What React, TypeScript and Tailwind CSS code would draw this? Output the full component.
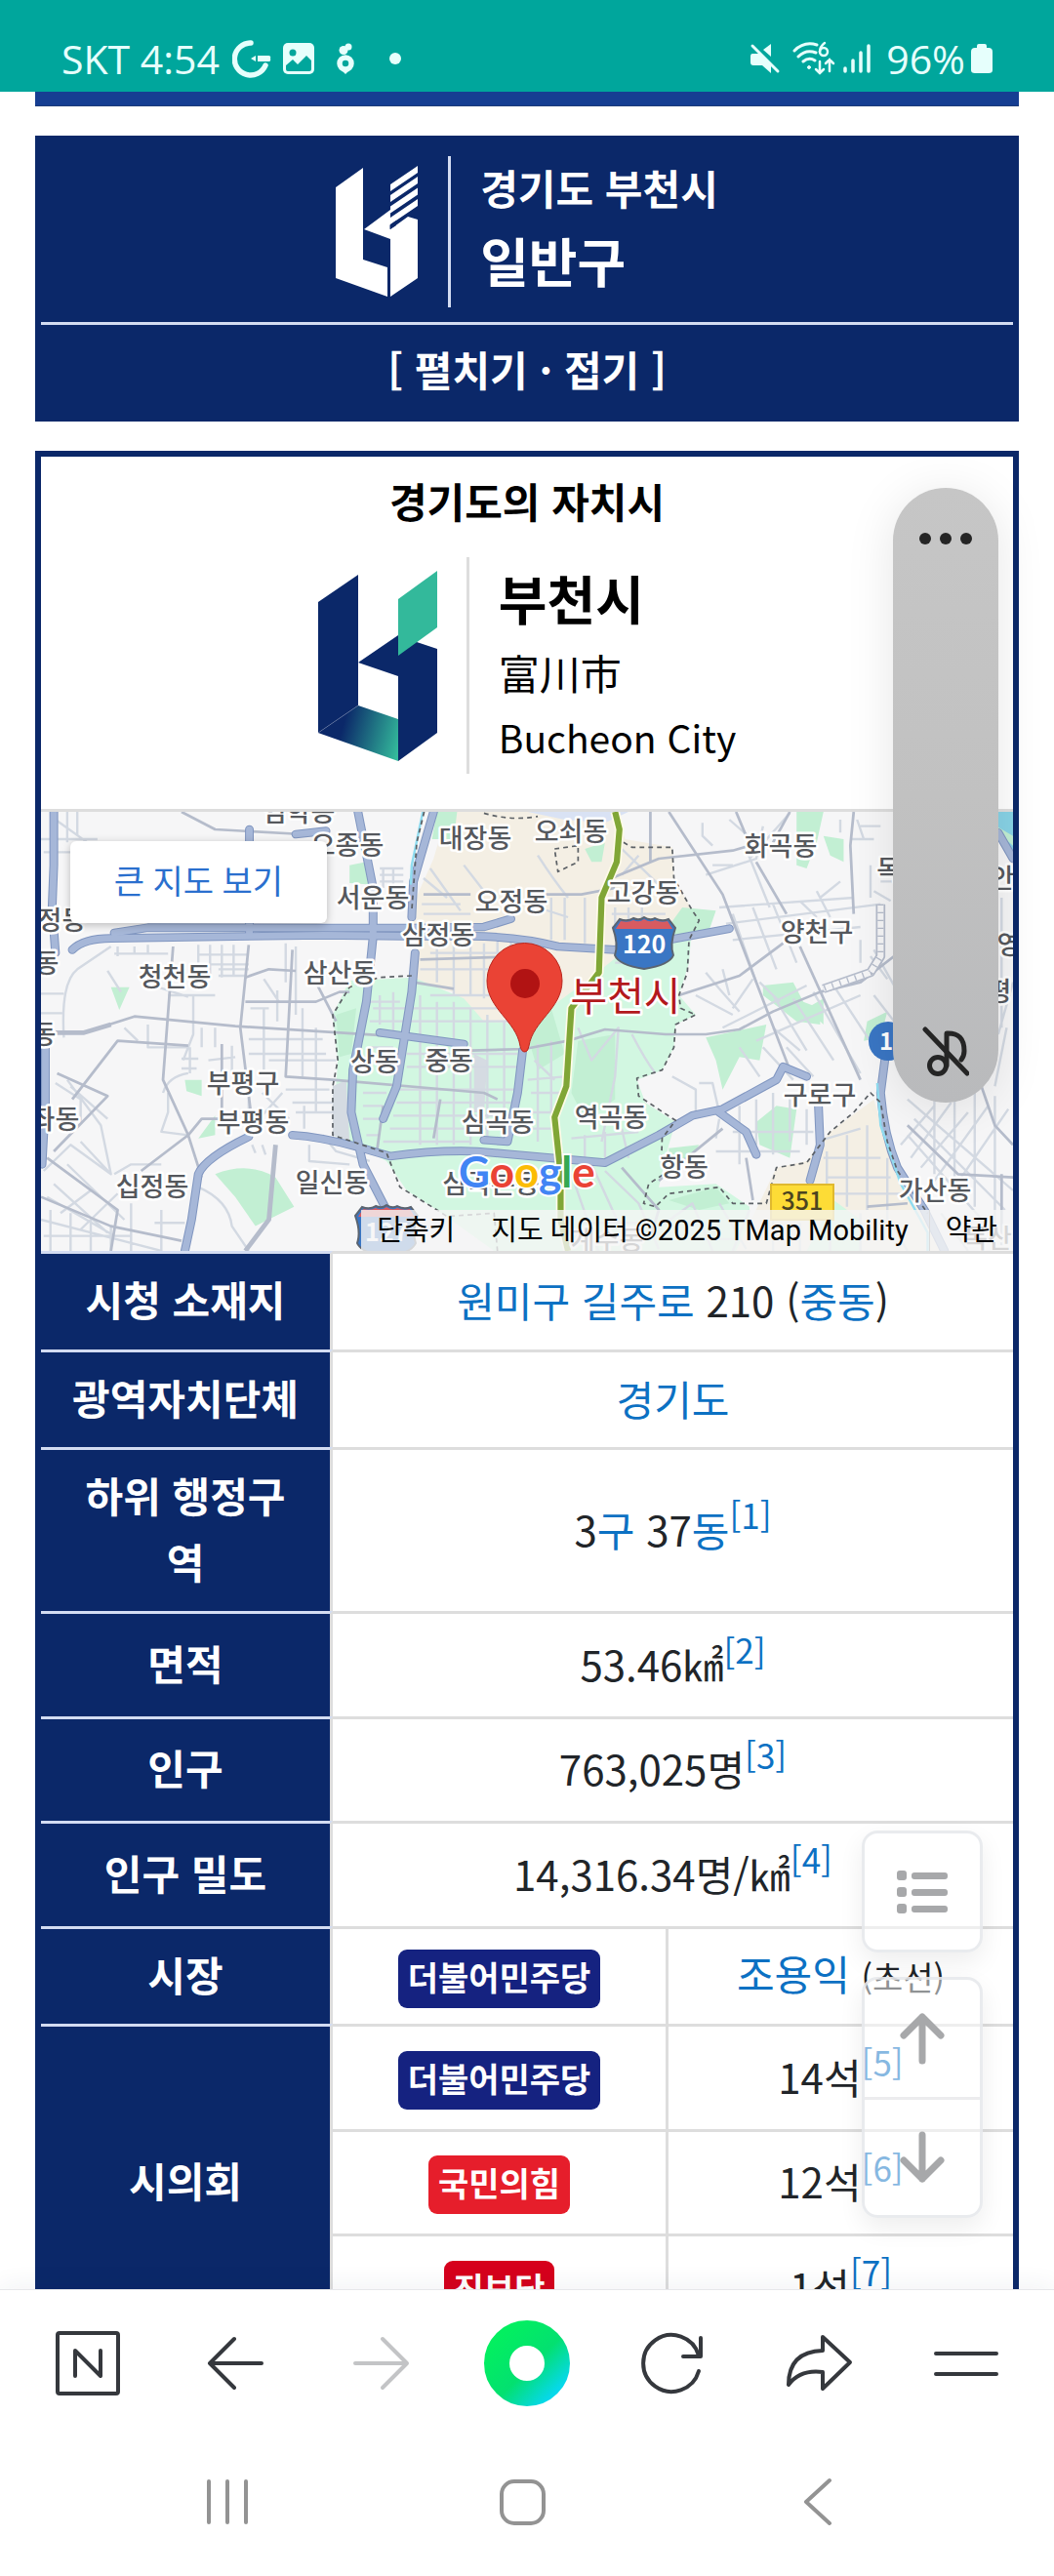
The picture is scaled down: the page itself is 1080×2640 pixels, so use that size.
import type { ReactNode } from "react";

/* ---------- Status bar ---------- */

function StatusBar() {
  return (
    <header className="relative z-20 flex h-[94px] shrink-0 items-center justify-between bg-[#00a69c] px-[63px] pt-[26px] font-['Open_Sans',sans-serif] text-[41px] leading-[54px] text-[#e6fffc]">
      <div className="flex items-center">
        <span>SKT 4:54</span>
        <svg className="ml-[13px] h-10 w-10" viewBox="0 0 40 40" fill="none">
          <path d="M19 4A16.500 16.500 0 1 0 34 27" stroke="currentColor" strokeWidth="5.500" strokeLinecap="round" />
          <path d="M19 20l5-3v6zM26 17h11a2 2 0 0 1 2 3 2 2 0 0 1-2 3H26z" fill="currentColor" />
        </svg>
        <svg className="ml-3 h-8 w-8" viewBox="0 0 32 32">
          <rect width="32" height="32" rx="5" fill="currentColor" />
          <circle cx="10" cy="10" r="3.500" fill="#00a69c" />
          <path d="M3 23l7-6 5 5 9-9 5 5v9q0 2-2 2H5q-2 0-2-2z" fill="#00a69c" />
        </svg>
        <svg className="ml-[22px] h-8 w-5" viewBox="0 0 20 32" fill="none">
          <circle cx="10" cy="21" r="6" stroke="currentColor" strokeWidth="5.500" />
          <path d="M4 26l6 6 6-6z" fill="currentColor" />
          <circle cx="8" cy="7.500" r="4.500" fill="currentColor" />
          <circle cx="13" cy="4" r="3.500" fill="currentColor" />
        </svg>
        <span className="ml-[35px] h-3 w-3 rounded-full bg-[#e6fffc]" />
      </div>
      <div className="flex items-center">
        <svg className="h-8 w-8" viewBox="0 0 32 32">
          <path d="M3 11h7l12 12v8l-9-8H4q-3 0-3-3v-6q0-3 2-3zM14 7l8-6v13z" fill="currentColor" />
          <path d="M3 3l26 26" stroke="currentColor" strokeWidth="3" strokeLinecap="round" />
        </svg>
        <svg className="ml-3 h-9 w-11" viewBox="0 0 44 36" fill="none" stroke="currentColor" strokeWidth="3" strokeLinecap="round">
          <path d="M2 10Q12 0 25 4M6 16q8-8 18-4M11 21q6-5 12-1" />
          <circle cx="17" cy="27" r="1.500" fill="currentColor" strokeWidth="1" />
          <circle cx="32" cy="11" r="4" strokeWidth="2.500" />
          <path d="M33 2q-5 4-5 9" strokeWidth="2.500" />
          <path d="M28 21v12m-4-4l4 4 4-4M38 31V19m-4 4l4-4 4 4" strokeWidth="2.500" />
        </svg>
        <svg className="ml-2 h-8 w-7" viewBox="0 0 28 32" stroke="currentColor" strokeWidth="3.500" strokeLinecap="round">
          <path d="M2 26v3M10 18v11M18 10v19M26 3v26" />
        </svg>
        <span className="ml-4">96%</span>
        <svg className="ml-[6px] h-8 w-[22px]" viewBox="0 0 22 32">
          <path d="M6 3q0-2 2-2h6q2 0 2 2v2h2q4 0 4 4v19q0 3-4 3H4q-4 0-4-3V9q0-4 4-4h2z" fill="currentColor" />
        </svg>
      </div>
    </header>
  );
}

/* ---------- Logos ---------- */

function WhiteLogo() {
  return (
    <svg className="h-[135px] w-[85px]" viewBox="0 0 85 135" fill="#fff" role="img" aria-label="부천시 로고">
      <path d="M0 22L28 2v94l25 8v30L0 115z" />
      <path d="M56 134l28-19V55l-10-3-18 13V45L29 65l27 10z" />
      <path d="M56 19L84 0v7L56 26zM56 30l28-19v7L56 37zM56 41.500l28-19v7l-28 19zM56 53l28-19v7L56 60z" />
      <path d="M55.500 60.500L62 56v5l-6.500 4z" fill="#0b2869" />
    </svg>
  );
}

function ColorLogo() {
  return (
    <svg className="h-[195px] w-[122px]" viewBox="0 0 122 195" role="img" aria-label="부천시 로고">
      <defs>
        <linearGradient id="fold" x1="25" y1="160" x2="84" y2="176" gradientUnits="userSpaceOnUse">
          <stop offset="0" stopColor="#0b2869" />
          <stop offset="1" stopColor="#33b99b" />
        </linearGradient>
      </defs>
      <path d="M0 32L41 4v134L0 166z" fill="#0b2869" />
      <path d="M0 166l41-28 41 14v43z" fill="url(#fold)" />
      <path d="M0 166l41-28" stroke="#7383a8" strokeWidth="0.500" />
      <path d="M82 195l40-29V80l-21-7-19-7-41 28 41 14z" fill="#0b2869" />
      <path d="M82 29l40-29v58L82 87z" fill="#33b99b" />
    </svg>
  );
}

/* ---------- Map ---------- */

const minorRoads = [
  "M122 120H290M130 160H250M200 36V130M230 36V110M165 60L260 130M122 595H190M122 655H185M190 730Q180 560 230 520L330 450",
  "M350 450V480M400 450V470M440 445V475M340 472H500M590 445V505H740M625 445V545M660 445V545M695 445V540M590 475H735M650 520H740M650 540H730",
  "M500 600H640M575 600V720L545 800M320 525L360 590M470 575L560 605M440 690V760H560M600 700V760M640 700V760M370 700L410 740M540 795H590M540 825H585M565 760V840",
  "M785 640V830M745 640H800M740 735H960M740 780H970M900 640V850M940 700V960M800 800H1000M850 890H980M870 930H990M880 960H1000M850 440V560M785 550L830 620M825 585V680M880 450V660",
  "M690 755V840M620 800L700 790M560 840Q500 850 485 900M500 900V960L480 1020L560 1030M740 880V960M780 900L860 980M840 900L780 970M905 940V1010",
  "M165 870L240 920V990M130 1140L210 1060L330 1150L300 1000L200 860M210 880L320 980M240 1050L330 1150M340 1150L390 1120H480M140 1220L340 1340M160 1180L320 1330M200 1120L370 1290M180 1270L270 1200M240 1320L350 1210M122 1290L480 1386M130 1340H390M150 1260V1386M210 1270V1386M270 1290V1386M330 1310V1386M390 1240V1386",
  "M590 1190Q680 1230 690 1310L740 1386M480 1260V1386M460 1300H550M780 1060L790 1090M750 1060L760 1085M920 1060V1110L1040 1120M960 1030L1000 1080L1100 1110",
  "M1130 210H1200M1130 230H1200M1130 250H1200M1140 210V270M1170 210V270M1260 240L1330 300M1280 210L1370 340M1255 320H1370M1260 350H1400M1380 200L1440 280M1400 440V600M1440 440V610M1480 430V630M1520 430V640M1350 440V600M1300 440V560M1250 520H1500M1280 600H1560M1280 470H1560",
  "M1130 600V690M1170 590V720M1250 600V1060M1300 620V1060M1350 620V1060M1400 640V1060M1450 660V1050M1500 680V1040M1110 640H1500M1100 680H1520M1210 780H1540M1210 820H1540M1190 890H1530M1180 930H1520M1170 970H1510M1160 1010H1480M1140 1050H1400M1080 900H1150M1080 940H1140M1080 980H1150M1090 1030H1130M1090 620H1190M1100 760H1170",
  "M1590 800L1650 860M1580 900H1680M1600 750V1050M1640 740V960M1570 860L1680 850M1570 960H1660M1580 1010H1650M1720 700L1760 800L1840 700L1830 850L1790 1050M1880 720Q1920 800 1950 840M1700 1040L1900 1020M1740 1030V1110M1800 1020V1100M1850 1010L1870 1100M1800 1140L1900 1240L1960 1380M1760 1120L1840 1300M1700 1150L1780 1386M1720 1300H1900",
  "M1600 170Q1650 250 1690 300M1600 330L1690 360M1640 300V430M1680 300V430M1740 300V440M1830 330V420M1870 330V420M1910 330V420M1820 350H1980M1820 390H1960M1850 150L1960 260M1900 170L1850 230M1830 500H1900",
  "M2090 70V110L2120 140M2120 200H2180M2170 60L2270 150M2270 80L2250 180L2100 230M2350 40L2230 180M2220 150L2290 330M2140 330L2540 300M2160 380L2620 320M2180 430L2560 390M2180 350L2250 560M2240 330L2310 520M2300 320L2370 500M2380 310L2430 360M2430 280L2470 360M2500 250L2440 300",
  "M2100 530L2140 580L2200 650M2150 520L2170 600M2070 600L2180 660M2240 550L2180 640M2150 700L2400 570M2250 740L2560 600M2300 600L2400 770M2360 610L2480 800M2420 590L2560 840M2480 570L2620 790M2300 700L2380 770M2260 560L2320 620M2200 760L2260 850M2270 760L2360 860M2340 760L2420 850",
  "M2000 850L2070 890V960M2080 870H2120L2140 960M2110 960L2180 980M2140 980L2130 1040M2200 940V1120M2250 920V1060M2300 900V1090M2350 910V1050M2180 1020H2420M2130 1080H2380M2400 950V1060M2430 1050L2560 1010M2450 1100H2620M2460 1160H2650M2470 1210H2680M2460 1080V1250M2520 1030V1250M2580 1000V1260M2640 1100V1290",
  "M2560 430V500M2600 460L2660 570M2590 480L2640 550M2500 60V100M2550 60L2570 120M2560 80H2620M2530 120H2600M2620 250H2660M2600 280L2650 310M2590 200V300M2600 600L2660 680",
  "M2700 920L3014 1200M2720 980L2990 1260M2700 1030L2930 1300M2780 940L2680 1060M2830 930L2710 1100M2880 960L2740 1130M2940 940L2780 1170M3000 950L2860 1160M2780 900V1150M2840 920V1200M2900 900V1250M2960 910V1300M2980 300V700M2995 700L2960 880M3014 560L2970 720",
  "M1980 1300L2060 1240L2120 1386M2050 1350H2200M2140 1240L2220 1380M2230 1260L2180 1386M2300 1290V1386M2380 1300V1386M2470 1280V1386M2560 1270V1386M2650 1300L2700 1386M2800 1270L2880 1386",
];

const arterialRoads = [
  "M540 36L640 90L900 105",
  "M515 450L485 860L560 1030L600 1160",
  "M740 445L715 700L745 950",
  "M870 460L850 850L990 860L1440 900L1480 920",
  "M165 715H250L400 665L700 695L1160 725",
  "M215 920L350 740L560 755",
  "M660 750V960",
  "M730 620H940L1010 590H1040",
  "M940 560L1000 680",
  "M730 545L800 520L880 525",
  "M160 1080L320 910L170 840",
  "M420 1140L560 1030L600 980H660",
  "M140 1100L350 1260L330 1386",
  "M122 1220L330 1310L540 1355",
  "M1120 1090L1140 940",
  "M1290 1040L1310 920M1230 560L1350 580M1260 290H1400M1250 490L1560 480",
  "M1400 770L1560 765L1690 740L1800 705L1980 720H2100L2200 705L2300 650L2440 590L2560 560L2660 480L2700 500",
  "M1820 240L1960 180L2180 155L2230 140",
  "M1568 290H1730L1830 270",
  "M1935 36V190",
  "M1990 36L2150 290L2350 830",
  "M2250 190L2340 350",
  "M2020 600L2200 540L2330 440",
  "M2190 36L2220 110L2280 130",
  "M2350 36L2300 130",
  "M2540 36L2530 140L2540 350",
  "M2380 450L2560 860",
  "M1850 1130L1960 1260L1940 1330",
  "M1960 1170L2150 1010M2220 1100L2240 1230",
  "M2700 1000L2850 1150L3014 1160M2920 880L2960 1000L3014 1060",
  "M2580 1250L2700 1240M2980 1150V1386",
];

const highways = [
  "M160 36V200L155 330L165 470",
  "M135 760V930L125 1120",
  "M215 460Q250 425 330 425L960 415L1200 418H1400Q1550 420 1660 450L1830 460L2170 395",
  "M340 408L440 392L960 393L1220 393L1440 390L1520 365",
  "M1065 36L1110 270L1110 420L1090 620L1050 830L1045 960L1080 1120L1150 1260",
  "M1290 36L1230 250L1225 360M1235 470L1225 590L1180 880L1140 980",
  "M550 1386L570 1290L590 1150Q610 1100 740 1035M870 1030Q950 1035 1060 1065L1160 1095Q1300 1075 1420 1080L1800 1115L1960 1030L2060 970L2150 950L2310 860L2330 820L2400 850",
  "M1555 770L1540 900L1510 1050L1440 1045",
  "M1130 715L1380 750",
  "M2140 960L2220 1020L2250 1090",
  "M2435 940L2440 1060L2410 1170",
  "M2635 780L2620 900Q2630 1030 2670 1130L2750 1260L2810 1386",
  "M742 90V125M742 370V415M880 105L970 95",
  "M2970 100L3014 180",
];

const mapLabels: [string, number, number][] = [
  ["임학동", 264, 10],
  ["오종동", 314, 44],
  ["대장동", 445, 37],
  ["서운동", 340, 98],
  ["오정동", 482, 102],
  ["삼정동", 407, 136],
  ["가정동", 9, 121],
  ["석남동", -19, 165],
  ["가좌동", -22, 238],
  ["청천동", 137, 179],
  ["삼산동", 306, 175],
  ["상동", 342, 266],
  ["중동", 418, 265],
  ["부평구", 207, 288],
  ["부평동", 217, 328],
  ["가좌동", 2, 325],
  ["심곡동", 468, 328],
  ["십정동", 114, 394],
  ["일신동", 298, 390],
  ["심곡본동", 461, 391],
  ["오쇠동", 543, 30],
  ["화곡동", 758, 45],
  ["고강동", 617, 93],
  ["목동", 881, 69],
  ["양천구", 795, 133],
  ["역곡동", 584, 323],
  ["구로구", 798, 300],
  ["항동", 659, 374],
  ["가산동", 916, 398],
  ["계수동", 580, 449],
  ["독산", 970, 447],
  ["안", 985, 78],
  ["영", 992, 146],
  ["평", 982, 194],
];

function Shield({ x, y, label }: { x: number; y: number; label: string }) {
  return (
    <g transform={`translate(${x} ${y})`}>
      <path
        d="M-25-25q8 3 14-1 6 3 11-1 6 4 11 1 7 4 14 1l7 9q-6 17-2 28Q26 22 0 26q-26-4-30-14 4-11-2-28z"
        fill="#3a76c4"
        stroke="#5b6470"
        strokeWidth="2"
      />
      <path d="M-24-23q8 2 13-1 6 3 11-1 6 4 11 1 7 3 13 1l5 8h-58z" fill="#d85b60" />
      <text y="10" textAnchor="middle" fill="#fff" fontSize="25" fontWeight="700">
        {label}
      </text>
    </g>
  );
}

function CityMap() {
  return (
    <div className="relative h-[450px] overflow-hidden bg-[#f6f6f7]">
      <svg
        className="absolute inset-0 h-full w-full font-['Noto_Sans_CJK_KR',sans-serif]"
        viewBox="0 0 996 450"
        preserveAspectRatio="xMidYMid slice"
        role="img"
        aria-label="부천시 지도"
      >
        <g transform="translate(-42 -12) scale(0.3444 0.3333)" fill="none" strokeLinejoin="round">
          <path d="M1330 36H1830L1860 120L2000 145L2005 240L2060 340L1960 420L1830 520L1740 590L1568 690L1440 680L1350 590L1230 560L1225 330L1290 180z" fill="#f4efe4" />
          <path d="M1570 36H1870L1800 70L1680 60z" fill="#d9e2f4" />
          <path d="M1040 555L1230 545L1380 610L1440 680L1568 690L1740 560L1850 470L2060 370L2050 500L2020 600L2070 660L2010 690L2005 760L1970 830L1895 860L1920 930L2010 990L1990 1060L1960 1190L2130 1180L2230 1250V1386H1470L1300 1260L1210 1200L1150 1110L1060 1060L990 1030L1005 800L990 660z" fill="#d2f7e1" />
          <path d="M990 880L1030 860L1040 1050L990 1030zM1410 780L1450 800L1440 960H1410z" fill="#d5dbe2" />
          <g fill="#c2efd3">
            <path d="M1000 660L1060 640L1045 780L1010 790zM1040 200L1090 190L1110 260L1040 255zM330 575H385L355 645zM550 860H600V910L555 895zM590 1040L640 970V1030zM640 1150Q740 1110 820 1160L875 1250L760 1310L700 1220z" />
            <path d="M1720 740L1830 720V920L1740 980L1700 900zM1568 720L1640 640L1680 780L1600 830zM1285 120H1350L1360 36H1300zM1740 150L1800 130L1790 190L1760 190zM2030 330L2130 340L2110 400L1960 430z" />
            <path d="M2370 36H2450L2430 130L2400 210L2370 200zM2450 110L2510 120V190L2470 170zM2270 570L2360 560L2390 620L2440 640V690L2370 680L2320 640L2270 600zM2400 640L2450 610V690zM2100 730L2280 690L2260 800L2200 790L2150 890L2130 800zM2250 990L2310 940L2370 950L2350 1100L2260 1060zM1990 1070L2080 1060L2050 1110L1990 1140zM1990 1230L2130 1190L2170 1240L2080 1260zM2580 680L2640 650L2620 730L2570 740z" />
          </g>
          <path d="M2600 920L2640 1060L2730 1240L2800 1386H2190L2310 1130L2400 1110L2470 1020z" fill="#f4efe4" />
          <path d="M2480 1230L2560 1290V1386H2400z" fill="#d2f7e1" />
          <path d="M2965 36H3014V160L2960 110z" fill="#88d3e6" />
          <path d="M2965 80L3014 110V140L2965 95z" fill="#c2efd3" />

          <g stroke="#d3d9e2" strokeWidth="7">
            {minorRoads.map((d) => (
              <path key={d} d={d} />
            ))}
          </g>
          <g stroke="#b5bccb" strokeWidth="8">
            {arterialRoads.map((d) => (
              <path key={d} d={d} />
            ))}
            <path d="M820 1060L800 1290L730 1386M165 715H250L330 690" strokeWidth="14" />
          </g>
          <path d="M2620 320V480L2590 530L2450 580" stroke="#b5bccb" strokeWidth="28" />
          <path d="M2620 320V480L2590 530L2450 580" stroke="#f6f6f7" strokeWidth="18" />
          <path d="M2620 320V480L2590 530L2450 580" stroke="#b5bccb" strokeWidth="18" strokeDasharray="4 20" />
          <g strokeLinecap="round">
            {highways.map((d) => (
              <path key={d} d={d} stroke="#8096c0" strokeWidth="26" />
            ))}
            {highways.map((d) => (
              <path key={d} d={d} stroke="#a6b7d8" strokeWidth="20" />
            ))}
          </g>
          <path d="M1258 36L1225 200L1222 260M2610 870L2620 1000L2680 1180L2760 1330V1386" stroke="#8fdcf0" strokeWidth="7" />
          <g stroke="#5c6166" strokeWidth="5" strokeDasharray="14 12">
            <path d="M1262 36L1240 130L1225 340M1225 540L1130 545L1040 575L990 660L1005 800L990 880V1030L1150 1085L1190 1190L1300 1260L1330 1280L1470 1270L1480 1386" />
            <path d="M1440 40Q1520 65 1600 50M1650 150L1720 140V190L1660 220zM1855 130L1880 145H2000L2005 240L2060 340L2080 370L2050 430L2045 530L2020 600L2025 640L2070 660L2010 690L2005 760L1970 830L1895 855L1900 910L2010 985L1970 1040L1968 1100L1990 1140L1930 1180L1915 1240L1950 1250L1990 1210L2140 1190L2180 1240L2280 1240L2310 1130L2400 1115L2470 1020L2540 960L2590 900L2620 930L2640 1050L2670 1140L2760 1270" />
          </g>
          <path d="M1830 36L1843 90L1835 190L1790 300L1782 530L1700 640L1685 880L1650 975L1668 1150V1290L1690 1386" stroke="#fffbe8" strokeWidth="28" />
          <path d="M1830 36L1843 90L1835 190L1790 300L1782 530L1700 640L1685 880L1650 975L1668 1150V1290L1690 1386" stroke="#80a636" strokeWidth="18" />
        </g>

        <Shield x={618} y={135} label="120" />
        <Shield x={354} y={430} label="127" />
        <circle cx="868" cy="235" r="20" fill="#3a76c4" />
        <text x="866" y="244" textAnchor="middle" fontSize="24" fontWeight="700" fill="#fff">
          1
        </text>
        <rect x="748" y="382" width="64" height="36" fill="#fddc36" stroke="#e0b92e" strokeWidth="2" />
        <text x="780" y="408" textAnchor="middle" fontSize="25" fontWeight="500" fill="#4b4420">
          351
        </text>

        <g fontSize="27" fontWeight="500" textAnchor="middle" fill="#55585d" stroke="#fff" strokeWidth="5" strokeLinejoin="round" paintOrder="stroke">
          {mapLabels.map(([name, x, y]) => (
            <text key={`${name}-${x}`} x={x} y={y}>
              {name}
            </text>
          ))}
          <text x="599" y="204" fontSize="41" fontWeight="400" fill="#b3191d">
            부천시
          </text>
        </g>

        <path
          d="M496 246q-4 0-5-6c-4-26-34-38-34-67a38 38 0 0 1 77 0c0 29-30 41-34 67q-1 6-4 6z"
          fill="#ea4335"
          stroke="#b9261d"
        />
        <circle cx="496" cy="176" r="15" fill="#b11313" />

        <text x="428" y="385" fontSize="44" fontWeight="700" fontFamily="Lato, sans-serif" stroke="#fff" strokeWidth="4" paintOrder="stroke">
          <tspan fill="#4285f4">G</tspan>
          <tspan fill="#ea4335">o</tspan>
          <tspan fill="#fbbc04">o</tspan>
          <tspan fill="#4285f4">g</tspan>
          <tspan fill="#34a853">l</tspan>
          <tspan fill="#ea4335">e</tspan>
        </text>
      </svg>

      <a
        href="#map"
        className="absolute left-[30px] top-[30px] flex h-[84px] w-[263px] items-center justify-center rounded-md bg-white font-[Roboto,'Noto_Sans_CJK_KR',sans-serif] text-[34px] text-[#2a6fce] shadow-[0_2px_8px_rgba(0,0,0,0.25)]"
      >
        큰 지도 보기
      </a>
      <div className="absolute bottom-0 right-0 flex h-[42px] items-center bg-[#f5f5f5]/80 font-[Roboto,'Noto_Sans_CJK_KR',sans-serif] text-[29px] leading-[42px] text-black">
        <button type="button" className="px-4">단축키</button>
        <span className="px-[21px]">지도 데이터 ©2025 TMap Mobility</span>
        <a href="#terms" className="border-l border-[#dcdcdc] px-4">약관</a>
      </div>
    </div>
  );
}

/* ---------- Info table ---------- */

function Link({ children }: { children: ReactNode }) {
  return (
    <a href="#link" className="text-[#0c71c3]">
      {children}
    </a>
  );
}

function Note({ n }: { n: number }) {
  return (
    <sup className="text-[35px]">
      <a href={`#fn-${n}`} className="text-[#0c71c3]">{`[${n}]`}</a>
    </sup>
  );
}

function Head({ children, rowSpan }: { children: ReactNode; rowSpan?: number }) {
  return (
    <th scope="row" rowSpan={rowSpan} className="border-r-[3px] border-t-[3px] border-r-[#ddd] border-t-[#d3dcf2] bg-[#0b2869] bg-clip-padding px-[30px] pb-[6px] font-bold text-white">
      {children}
    </th>
  );
}

function Cell({ children, wide }: { children: ReactNode; wide?: boolean }) {
  return (
    <td colSpan={wide ? 2 : 1} className="border-t-[3px] border-[#ddd] pb-1">
      {children}
    </td>
  );
}

const partyColors = {
  blue: "bg-[#152280]",
  red: "bg-[#e61e2b]",
  crimson: "bg-[#d6001c]",
};

function PartyCell({ color, children }: { color: keyof typeof partyColors; children: ReactNode }) {
  return (
    <td className="border-r-[3px] border-t-[3px] border-[#ddd] pt-1">
      <a href="#party" className={`mx-auto block h-[60px] w-fit rounded-[9px] px-[10px] text-[34px] font-bold leading-[56px] text-white ${partyColors[color]}`}>
        {children}
      </a>
    </td>
  );
}

function InfoTable() {
  return (
    <table className="w-full table-fixed border-separate border-spacing-0 text-center leading-[68px] text-[#212529]">
      <colgroup>
        <col className="w-[299px]" />
        <col className="w-[344px]" />
        <col />
      </colgroup>
      <tbody>
        <tr className="h-[101px]">
          <Head>시청 소재지</Head>
          <Cell wide>
            <Link>원미구</Link> <Link>길주로</Link> 210 (<Link>중동</Link>)
          </Cell>
        </tr>
        <tr className="h-[100px]">
          <Head>광역자치단체</Head>
          <Cell wide>
            <Link>경기도</Link>
          </Cell>
        </tr>
        <tr className="h-[168px]">
          <Head>하위 행정구역</Head>
          <Cell wide>
            3<Link>구</Link> 37<Link>동</Link>
            <Note n={1} />
          </Cell>
        </tr>
        <tr className="h-[108px]">
          <Head>면적</Head>
          <Cell wide>
            53.46㎢
            <Note n={2} />
          </Cell>
        </tr>
        <tr className="h-[107px]">
          <Head>인구</Head>
          <Cell wide>
            763,025명
            <Note n={3} />
          </Cell>
        </tr>
        <tr className="h-[108px]">
          <Head>인구 밀도</Head>
          <Cell wide>
            14,316.34명/㎢
            <Note n={4} />
          </Cell>
        </tr>
        <tr className="h-[100px]">
          <Head>시장</Head>
          <PartyCell color="blue">더불어민주당</PartyCell>
          <Cell>
            <Link>조용익</Link> <span className="text-[34px]">(초선)</span>
          </Cell>
        </tr>
        <tr className="h-[108px]">
          <Head rowSpan={3}>시의회</Head>
          <PartyCell color="blue">더불어민주당</PartyCell>
          <Cell>
            14석
            <Note n={5} />
          </Cell>
        </tr>
        <tr className="h-[107px]">
          <PartyCell color="red">국민의힘</PartyCell>
          <Cell>
            12석
            <Note n={6} />
          </Cell>
        </tr>
        <tr className="h-[108px]">
          <PartyCell color="crimson">진보당</PartyCell>
          <Cell>
            1석
            <Note n={7} />
          </Cell>
        </tr>
      </tbody>
    </table>
  );
}

/* ---------- Floating controls ---------- */

function FloatingHandle() {
  return (
    <div className="absolute right-[57px] top-[406px] z-10 flex h-[630px] w-[108px] flex-col items-center justify-between rounded-full bg-linear-to-b from-[#c6c6c6] via-[#c1c1c1] to-[#b9babc] pb-[26px] pt-[46px] text-[#252525] shadow-[0_6px_50px_rgba(0,0,0,0.1)]">
      <button type="button" aria-label="더보기" className="flex gap-[9px]">
        <span className="h-3 w-3 rounded-full bg-current" />
        <span className="h-3 w-3 rounded-full bg-current" />
        <span className="h-3 w-3 rounded-full bg-current" />
      </button>
      <button type="button" aria-label="음소거">
        <svg className="h-[52px] w-12" viewBox="0 0 48 52" fill="none" stroke="currentColor" strokeWidth="5" strokeLinecap="round" strokeLinejoin="round">
          <path d="M3 3l43 45" />
          <circle cx="16" cy="40" r="8.500" />
          <path d="M25 40V7q18-1 18 18 0 5-3 9" />
        </svg>
      </button>
    </div>
  );
}

function PageButtons() {
  const box = "border-[3px] border-[#e3e6ea]/80 bg-white/50 shadow-[0_10px_26px_rgba(0,0,0,0.07)] text-[#a7a8aa] rounded-[16px]";
  return (
    <div className="absolute right-[73px] top-[1782px] z-10 flex w-[124px] flex-col gap-[25px]">
      <button type="button" aria-label="목차" className={`flex h-[125px] items-center justify-center ${box}`}>
        <svg className="h-12 w-14" viewBox="0 0 56 48" fill="currentColor">
          <rect x="2" y="2" width="10" height="10" rx="3" />
          <rect x="2" y="19" width="10" height="10" rx="3" />
          <rect x="2" y="36" width="10" height="10" rx="3" />
          <rect x="17" y="4" width="37" height="7" rx="3" />
          <rect x="17" y="21" width="37" height="7" rx="3" />
          <rect x="17" y="38" width="37" height="7" rx="3" />
        </svg>
      </button>
      <div className={`flex flex-col ${box}`}>
        <button type="button" aria-label="맨 위로" className="flex h-[120px] items-center justify-center">
          <svg className="h-14 w-12" viewBox="0 0 48 56" fill="none" stroke="currentColor" strokeWidth="7" strokeLinecap="round" strokeLinejoin="round">
            <path d="M24 51V6M5 25L24 6l19 19" />
          </svg>
        </button>
        <button type="button" aria-label="맨 아래로" className="flex h-[121px] items-center justify-center border-t-[3px] border-[#ececee]">
          <svg className="h-14 w-12" viewBox="0 0 48 56" fill="none" stroke="currentColor" strokeWidth="7" strokeLinecap="round" strokeLinejoin="round">
            <path d="M24 5v45M5 31l19 19 19-19" />
          </svg>
        </button>
      </div>
    </div>
  );
}

/* ---------- Bottom bars ---------- */

function BarButton({ label, children, dim }: { label: string; children: ReactNode; dim?: boolean }) {
  return (
    <button type="button" aria-label={label} disabled={dim} className={`flex h-full flex-1 items-center justify-center ${dim ? "text-[#c3c4c6]" : "text-[#35383d]"}`}>
      <svg className="h-[90px] w-[90px]" viewBox="0 0 90 90" fill="none" stroke="currentColor" strokeWidth="4" strokeLinecap="round" strokeLinejoin="round">
        {children}
      </svg>
    </button>
  );
}

function BrowserBar() {
  return (
    <nav className="relative z-20 flex h-[150px] shrink-0 border-t border-[#e6e7ea] bg-white px-[15px] shadow-[0_-4px_24px_rgba(30,50,90,0.06)]">
      <BarButton label="홈">
        <rect x="14" y="14" width="62" height="62" rx="2" />
        <path d="M32 58V32l26 26V32" />
      </BarButton>
      <BarButton label="뒤로">
        <path d="M73 45H22M45 20L20 45l25 25" />
      </BarButton>
      <BarButton label="앞으로" dim>
        <path d="M19 45h51M47 20l25 25-25 25" />
      </BarButton>
      <BarButton label="네이버 그린닷">
        <defs>
          <linearGradient id="dot" x1="20" y1="15" x2="76" y2="72" gradientUnits="userSpaceOnUse">
            <stop offset="0" stopColor="#03ef60" />
            <stop offset="0.550" stopColor="#03e070" />
            <stop offset="1" stopColor="#06d8ea" />
          </linearGradient>
        </defs>
        <circle cx="45" cy="45" r="31" stroke="url(#dot)" strokeWidth="26" />
      </BarButton>
      <BarButton label="새로고침">
        <path d="M71 53A29 29 0 1 1 71 37M73 19v19H55" />
      </BarButton>
      <BarButton label="공유">
        <path d="M48 18l28 26-28 27V54q-23-3-35 13 0-34 35-35z" />
      </BarButton>
      <BarButton label="메뉴">
        <path d="M14 35h62M14 56h62" />
      </BarButton>
    </nav>
  );
}

function SystemBar() {
  return (
    <nav className="relative z-20 flex shrink-0 bg-white pb-[51px] pl-[82px] pr-[90px] pt-[43px] text-[#939393]">
      <button type="button" aria-label="최근 앱" className="flex flex-1 justify-center">
        <svg className="h-[50px] w-[50px]" viewBox="0 0 50 50" stroke="currentColor" strokeWidth="4" strokeLinecap="round">
          <path d="M6 4v42M25 4v42M44 4v42" />
        </svg>
      </button>
      <button type="button" aria-label="홈 화면" className="flex flex-1 justify-center">
        <svg className="h-[50px] w-[50px]" viewBox="0 0 50 50" fill="none" stroke="currentColor" strokeWidth="4">
          <rect x="3" y="4" width="43" height="43" rx="13" />
        </svg>
      </button>
      <button type="button" aria-label="뒤로 가기" className="flex flex-1 justify-center">
        <svg className="h-[50px] w-[50px]" viewBox="0 0 50 50" fill="none" stroke="currentColor" strokeWidth="4" strokeLinecap="round" strokeLinejoin="round">
          <path d="M36 3L12 25l24 22" />
        </svg>
      </button>
    </nav>
  );
}

/* ---------- Page ---------- */

export default function App() {
  return (
    <div lang="ko" className="flex h-screen flex-col overflow-hidden bg-white font-['Noto_Sans_CJK_KR',sans-serif] text-[42px] leading-[67px]">
      <StatusBar />
      <main className="relative min-h-0 flex-1 overflow-hidden">
        <div className="flex flex-col gap-[30px] px-9">
          <div className="h-[15px] border-b border-[#1d3b78] bg-[#163e92]" />

          <section className="border-[6px] border-[#0b2869] bg-[#0b2869] font-bold text-white">
            <div className="flex items-center justify-center gap-[30px] py-[15px]">
              <WhiteLogo />
              <div className="border-l-[3px] border-[#d3dcf2] pb-1 pl-[30px]">
                <p className="leading-[63px]">경기도 부천시</p>
                <p className="text-[54px] leading-[88px]">일반구</p>
              </div>
            </div>
            <button type="button" className="w-full border-t-[3px] border-[#d3dcf2] pb-[15px] pt-[11px] text-center">
              [ 펼치기 · 접기 ]
            </button>
          </section>

          <section className="border-[6px] border-[#0b2869] text-black">
            <h1 className="pt-[11px] text-center font-bold">경기도의 자치시</h1>
            <div className="flex items-center justify-center gap-[30px] pb-9 pt-[25px]">
              <ColorLogo />
              <div className="border-l-[3px] border-[#ddd] pb-1 pl-[30px]">
                <p className="text-[54px] font-bold leading-[84px]">부천시</p>
                <p>富川市</p>
                <p className="text-[39px]">Bucheon City</p>
              </div>
            </div>
            <div className="border-t-[3px] border-[#ddd]">
              <CityMap />
            </div>
            <InfoTable />
          </section>
        </div>
        <FloatingHandle />
        <PageButtons />
      </main>
      <BrowserBar />
      <SystemBar />
    </div>
  );
}
